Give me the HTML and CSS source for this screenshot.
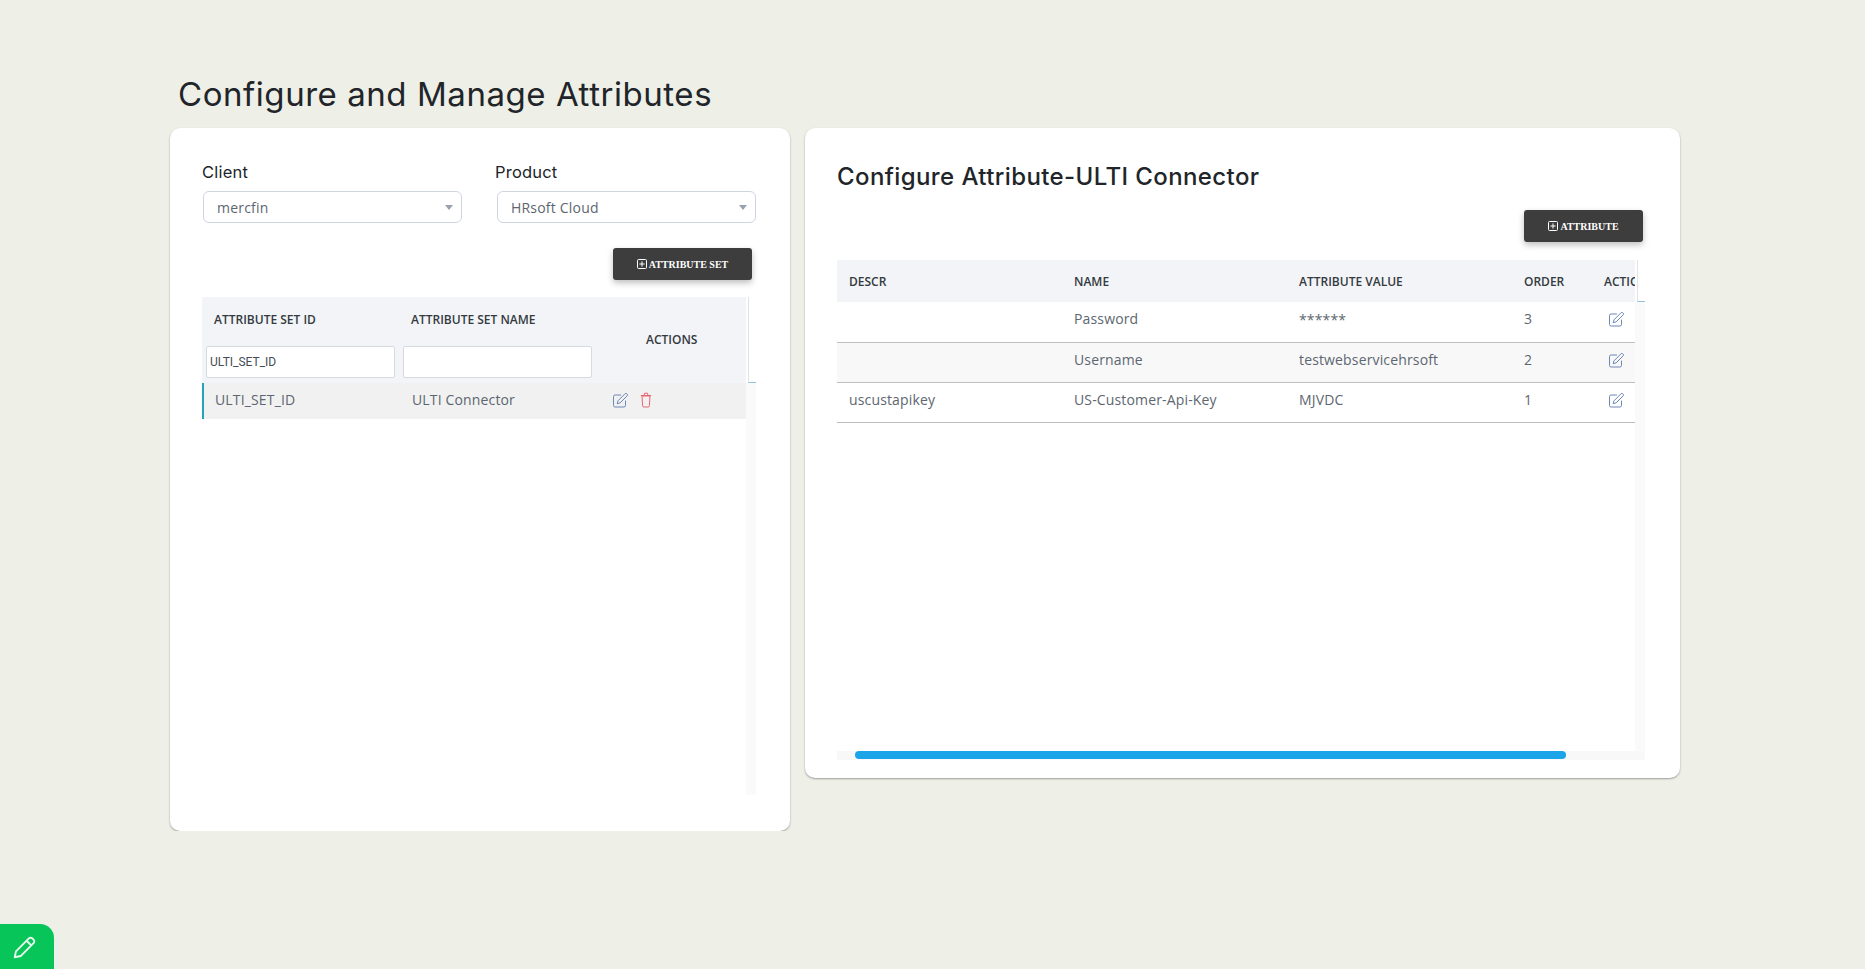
FILE: index.html
```html
<!DOCTYPE html>
<html lang="en">
<head>
  <meta charset="UTF-8">
  <title>Configure and Manage Attributes</title>
  <link rel="stylesheet" href="styles.css">
</head>
<body>
  <main class="page">
    <h1 class="page-title">Configure and Manage Attributes</h1>
    <div class="cards">

      <section class="card card-sets">
        <div class="filters">
          <div class="filter">
            <label class="filter-label" for="client">Client</label>
            <div class="select-box">
              <select id="client"><option>mercfin</option></select>
            </div>
          </div>
          <div class="filter">
            <label class="filter-label" for="product">Product</label>
            <div class="select-box">
              <select id="product"><option>HRsoft Cloud</option></select>
            </div>
          </div>
        </div>

        <div class="toolbar toolbar-sets">
          <button class="btn-dark btn-set">
            <svg class="icon-plus" viewBox="0 0 10 10"><rect x="0.5" y="0.5" width="9" height="9" rx="1"/><path d="M5 2.4v5.2M2.4 5h5.2"/></svg>
            ATTRIBUTE SET
          </button>
        </div>

        <div class="grid grid-sets">
          <div class="grid-head">
            <table class="tbl">
              <colgroup><col class="set-id"><col class="set-name"><col></colgroup>
              <tr>
                <th class="th-title">ATTRIBUTE SET ID</th>
                <th class="th-title">ATTRIBUTE SET NAME</th>
                <th class="th-actions" rowspan="2">ACTIONS</th>
              </tr>
              <tr>
                <td class="th-filter"><input type="text" value="ULTI_SET_ID"></td>
                <td class="th-filter"><input type="text"></td>
              </tr>
            </table>
          </div>
          <div class="gutter-head"></div>
          <div class="grid-body">
            <table class="tbl">
              <colgroup><col class="set-id"><col class="set-name"><col></colgroup>
              <tr class="row-selected">
                <td>ULTI_SET_ID</td>
                <td>ULTI Connector</td>
                <td class="cell-icons">
                  <svg class="icon icon-edit" viewBox="0 0 16 16"><path d="M13 8.600V13.400a1.600 1.600 0 0 1-1.600 1.600H2.600A1.600 1.600 0 0 1 1 13.400V4.600A1.600 1.600 0 0 1 2.600 3H8.500"/><path d="M5.500 8.800 12.600 1.700a1.100 1.100 0 0 1 1.600 0l.5.5a1.100 1.100 0 0 1 0 1.600L7.600 10.900l-2.900.8z"/></svg>
                  <svg class="icon icon-trash" viewBox="0 0 12 16"><path d="M2 4h8l-.6 9.800a1.300 1.300 0 0 1-1.300 1.200H3.900a1.300 1.300 0 0 1-1.300-1.200z"/><path d="M.8 3.500h10.400M4 3.300 4.600 1.200h2.800L8 3.300"/></svg>
                </td>
              </tr>
            </table>
          </div>
          <div class="gutter-track"></div>
        </div>
      </section>

      <section class="card card-attrs">
        <h2 class="card-title">Configure Attribute-ULTI Connector</h2>
        <div class="toolbar toolbar-attrs">
          <button class="btn-dark btn-attr">
            <svg class="icon-plus" viewBox="0 0 10 10"><rect x="0.5" y="0.5" width="9" height="9" rx="1"/><path d="M5 2.4v5.2M2.4 5h5.2"/></svg>
            ATTRIBUTE
          </button>
        </div>

        <div class="grid grid-attrs">
          <div class="grid-head">
            <table class="tbl">
              <colgroup><col class="c-wide"><col class="c-wide"><col class="c-wide"><col class="c-order"><col></colgroup>
              <tr>
                <th>DESCR</th>
                <th>NAME</th>
                <th>ATTRIBUTE VALUE</th>
                <th>ORDER</th>
                <th class="th-clip">ACTIONS</th>
              </tr>
            </table>
          </div>
          <div class="gutter-head"></div>
          <div class="grid-body">
            <table class="tbl tbl-lines">
              <colgroup><col class="c-wide"><col class="c-wide"><col class="c-wide"><col class="c-order"><col></colgroup>
              <tr>
                <td></td>
                <td>Password</td>
                <td class="cell-mask">******</td>
                <td>3</td>
                <td class="cell-icon"><svg class="icon icon-edit" viewBox="0 0 16 16"><path d="M13 8.600V13.400a1.600 1.600 0 0 1-1.600 1.600H2.600A1.600 1.600 0 0 1 1 13.400V4.600A1.600 1.600 0 0 1 2.600 3H8.500"/><path d="M5.500 8.800 12.600 1.700a1.100 1.100 0 0 1 1.600 0l.5.5a1.100 1.100 0 0 1 0 1.600L7.600 10.900l-2.900.8z"/></svg></td>
              </tr>
              <tr class="row-alt">
                <td></td>
                <td>Username</td>
                <td>testwebservicehrsoft</td>
                <td>2</td>
                <td class="cell-icon"><svg class="icon icon-edit" viewBox="0 0 16 16"><path d="M13 8.600V13.400a1.600 1.600 0 0 1-1.600 1.600H2.600A1.600 1.600 0 0 1 1 13.400V4.600A1.600 1.600 0 0 1 2.600 3H8.500"/><path d="M5.500 8.800 12.600 1.700a1.100 1.100 0 0 1 1.600 0l.5.5a1.100 1.100 0 0 1 0 1.600L7.600 10.900l-2.900.8z"/></svg></td>
              </tr>
              <tr>
                <td>uscustapikey</td>
                <td>US-Customer-Api-Key</td>
                <td>MJVDC</td>
                <td>1</td>
                <td class="cell-icon"><svg class="icon icon-edit" viewBox="0 0 16 16"><path d="M13 8.600V13.400a1.600 1.600 0 0 1-1.600 1.600H2.600A1.600 1.600 0 0 1 1 13.400V4.600A1.600 1.600 0 0 1 2.600 3H8.500"/><path d="M5.500 8.800 12.600 1.700a1.100 1.100 0 0 1 1.600 0l.5.5a1.100 1.100 0 0 1 0 1.600L7.600 10.900l-2.900.8z"/></svg></td>
              </tr>
            </table>
          </div>
          <div class="gutter-track"></div>
          <div class="hscroll"><div class="hscroll-thumb"></div></div>
        </div>
      </section>

    </div>
  </main>

  <button class="edit-tab" aria-label="Edit">
    <svg viewBox="0 0 24 24"><path d="M16.200 3.300a2.300 2.300 0 0 1 3.300 0l1.200 1.200a2.300 2.300 0 0 1 0 3.300L8.300 20.200 2.600 21.400l1.200-5.700z"/><path d="M14 5.500l4.500 4.500"/></svg>
  </button>
</body>
</html>
```

FILE: styles.css
```css
* { box-sizing: border-box; }

body {
  margin: 0;
  background: #eeefe7;
  font-family: "Open Sans", Arial, sans-serif;
  color: #5d6670;
}

.page {
  padding: 72px 0 0 170px;
}

.page-title {
  margin: 0 0 12px 8px;
  font-family: Inter, Arial, sans-serif;
  font-size: 33px;
  font-weight: 400;
  letter-spacing: 0.55px;
  line-height: 44px;
  color: #212529;
}

.cards {
  display: flex;
  align-items: flex-start;
  gap: 15px;
}

.card {
  background: #fff;
  border-radius: 10px;
  box-shadow: 0 1px 2px rgba(0,0,0,0.35);
}

.card-sets {
  width: 620px;
  height: 703px;
  padding: 33px 32px 0;
}

.card-attrs {
  width: 875px;
  height: 650px;
  padding: 31px 32px 0;
}

/* client / product */
.filters {
  display: flex;
  gap: 33px;
}

.filter { width: 260px; }

.filter-label {
  display: block;
  height: 30px;
  font-family: Inter, Arial, sans-serif;
  font-size: 16.5px;
  letter-spacing: 0.2px;
  line-height: 22px;
  color: #212529;
}

.select-box {
  position: relative;
  margin-left: 1px;
  width: 259px;
}

.filter + .filter .select-box { margin-left: 2px; }

.select-box::after {
  content: "";
  position: absolute;
  right: 9px;
  top: 14px;
  border-left: 4px solid transparent;
  border-right: 4px solid transparent;
  border-top: 5px solid #98a1ad;
}

.select-box select {
  appearance: none;
  display: block;
  width: 100%;
  height: 32px;
  padding: 0 13px;
  background: #fff;
  border: 1px solid #cfd5df;
  border-radius: 6px;
  font-family: "Open Sans", Arial, sans-serif;
  font-size: 14px;
  letter-spacing: 0.2px;
  color: #5d6670;
}

/* buttons */
.toolbar {
  display: flex;
  justify-content: flex-end;
}

.toolbar-sets { margin: 25px 6px 17px 0; }
.toolbar-attrs { margin: 15px 5px 18px 0; }

.btn-dark {
  display: flex;
  align-items: center;
  justify-content: center;
  gap: 2px;
  height: 32px;
  padding: 0;
  background: #3d3d3d;
  border: none;
  border-radius: 3px;
  box-shadow: 0 3px 6px rgba(0,0,0,0.25);
  color: #fff;
  font-family: "Liberation Serif", serif;
  font-size: 10px;
  font-weight: 700;
  cursor: pointer;
}

.btn-set { width: 139px; }
.btn-attr { width: 119px; }

.icon-plus {
  width: 10px;
  height: 10px;
  fill: none;
  stroke: #fff;
  stroke-width: 1;
}

/* tables */
.grid {
  display: grid;
}

.grid-sets {
  grid-template-columns: 544px 10px;
  grid-template-rows: 85px 1px 412px;
}

.grid-attrs {
  position: relative;
  grid-template-columns: 798px 10px;
  grid-template-rows: 42px 449px 9px;
}

.grid-head {
  background: #f3f4f7;
  overflow: hidden;
}

.gutter-head {
  margin-left: 2px;
  border-left: 1px solid #dfe3e8;
  border-bottom: 1px solid #8fc4d8;
}

.grid-sets .grid-head { grid-row: 1 / span 2; }
.grid-sets .gutter-head { grid-row: 1; margin-bottom: -1px; }
.grid-sets .grid-body { grid-row: 3; grid-column: 1; }
.grid-sets .gutter-track { grid-row: 3; grid-column: 2; }

.gutter-track { background: #fafafa; }

.tbl {
  width: 100%;
  table-layout: fixed;
  border-collapse: collapse;
  font-size: 14px;
  letter-spacing: 0.15px;
}

.tbl th {
  padding: 0 0 0 12px;
  font-size: 12px;
  font-weight: 600;
  letter-spacing: 0;
  color: #333a40;
  text-align: left;
}

.tbl td { padding: 0 0 0 12px; }

.grid-sets .tbl .set-id { width: 197px; }
.grid-sets .tbl .set-name { width: 197px; }

.grid-sets .tbl tr { height: 36px; }
.grid-sets .th-title { height: 45px; padding-left: 12px; }
.tbl .th-actions { padding-left: 50px; }

.tbl td.th-filter {
  height: 40px;
  padding: 0 0 4px 4px;
  vertical-align: bottom;
}

.th-filter input {
  display: block;
  width: 189px;
  height: 32px;
  padding: 0 3px;
  background: #fff;
  border: 1px solid #d6dae0;
  border-radius: 2px;
  font-family: Roboto, Arial, sans-serif;
  font-size: 12px;
  color: #454c53;
}

.row-selected { background: #f1f1f1; }
.row-selected td { padding-bottom: 4px; }
.row-selected td:first-child {
  border-left: 2px solid #22a3b8;
  padding-left: 11px;
}

.row-selected .cell-icons {
  padding: 0 0 2px 15px;
  white-space: nowrap;
  line-height: 0;
}

.icon {
  fill: none;
  stroke-width: 1;
  stroke-linejoin: round;
}

.icon-edit {
  width: 17px;
  height: 16px;
  stroke: #6d87b6;
}

.icon-trash {
  width: 12px;
  height: 16px;
  margin-left: 7px;
  stroke: #ea6470;
}

.grid-attrs .c-wide { width: 225px; }
.grid-attrs .c-order { width: 79px; }

.grid-attrs .grid-head .tbl tr { height: 42px; }
.grid-attrs .grid-head th { padding-top: 1px; }
.tbl .th-clip { padding-left: 13px; white-space: nowrap; overflow: hidden; }

.tbl-lines tr { height: 40px; border-bottom: 1px solid #bdbfc1; }
.tbl-lines td { padding-bottom: 6px; }
.row-alt { background: #f8f8f8; }
.tbl-lines .cell-mask { vertical-align: top; padding-top: 8px; }
.tbl-lines .cell-icon { line-height: 0; padding-left: 17px; padding-bottom: 5px; }

.grid-attrs .grid-body { background: #fff; }

.hscroll {
  grid-column: 1 / span 2;
  background: #f8f8f8;
  padding: 0 0 0 18px;
}

.hscroll-thumb {
  width: 711px;
  height: 8px;
  background: #1ba5e8;
  border-radius: 4px;
}

.card-title {
  margin: 0;
  font-family: Inter, Arial, sans-serif;
  font-size: 24px;
  font-weight: 500;
  letter-spacing: 0.4px;
  line-height: 36px;
  color: #212529;
}

/* green tab bottom left */
.edit-tab {
  position: fixed;
  left: 0;
  bottom: 0;
  width: 54px;
  height: 45px;
  padding: 0;
  background: #08c55a;
  border: none;
  border-top-right-radius: 14px;
  cursor: pointer;
}

.edit-tab svg {
  display: block;
  width: 25px;
  height: 25px;
  margin: 2px 0 0 12px;
  fill: none;
  stroke: #e8fbef;
  stroke-width: 1.8;
  stroke-linejoin: round;
}
```
